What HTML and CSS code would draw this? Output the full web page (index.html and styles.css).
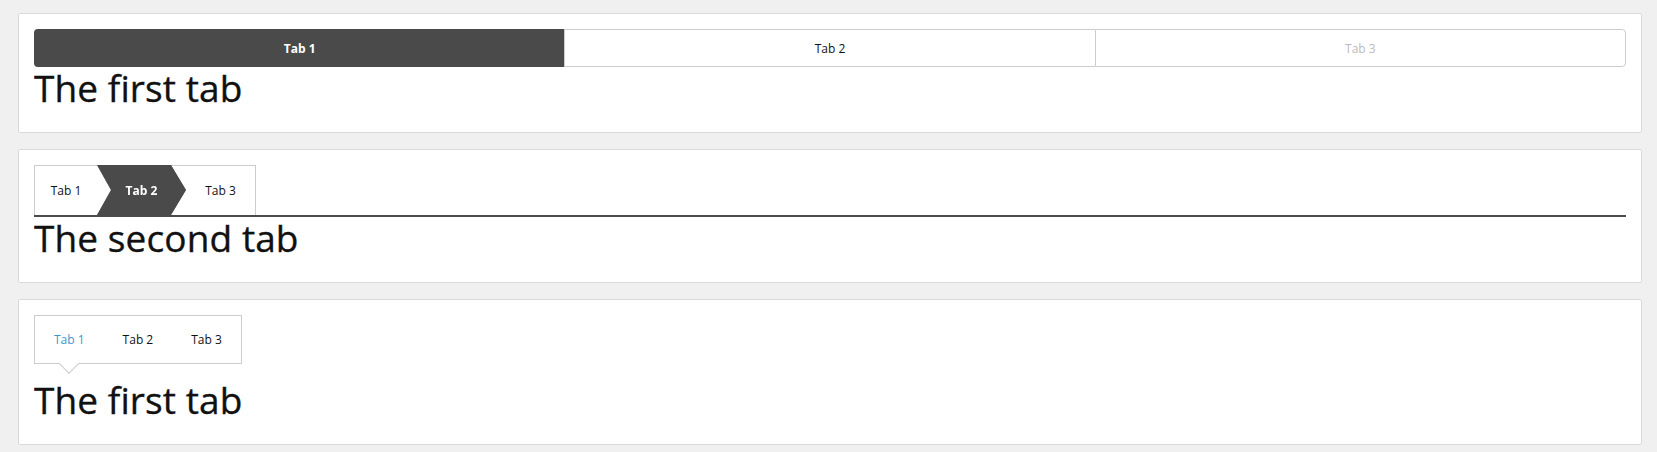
FILE: index.html
```html
<!DOCTYPE html>
<html>
<head>
<meta charset="utf-8">
<title>Tabs</title>
<link rel="stylesheet" href="styles.css">
</head>
<body>
  <section class="card">
    <div class="seg">
      <div class="seg-tab active">Tab 1</div>
      <div class="seg-tab">Tab 2</div>
      <div class="seg-tab disabled">Tab 3</div>
    </div>
    <h1 class="title">The first tab</h1>
  </section>

  <section class="card">
    <div class="steps">
      <div class="step step-first">Tab 1</div>
      <div class="step step-active"><span class="step-label">Tab 2</span></div>
      <div class="step step-last">Tab 3</div>
    </div>
    <h1 class="title">The second tab</h1>
  </section>

  <section class="card">
    <div class="pills">
      <div class="pill active">Tab 1</div>
      <div class="pill">Tab 2</div>
      <div class="pill">Tab 3</div>
    </div>
    <h1 class="title">The first tab</h1>
  </section>
</body>
</html>
```

FILE: styles.css
```css
html, body {
  background: #f0f0f0;
}
body {
  margin: 13px 15px 0 18px;
  font-family: "Open Sans", "Liberation Sans", sans-serif;
  color: #111;
}
.card {
  background: #fff;
  border: 1px solid #d9d9d9;
  border-radius: 2px;
  padding: 15px;
  margin-bottom: 16px;
}
.title {
  font-size: 37px;
  line-height: 42px;
  font-weight: 400;
  letter-spacing: 0.1px;
  -webkit-text-stroke: 0.35px #111;
  margin: 0 0 8px 0;
  color: #111;
}

/* Segmented tabs */
.seg {
  display: flex;
  height: 38px;
}
.seg-tab {
  flex: 1 1 0;
  box-sizing: border-box;
  border-top: 1px solid #ccc;
  border-bottom: 1px solid #ccc;
  border-left: 1px solid #ccc;
  display: flex;
  align-items: center;
  justify-content: center;
  font-size: 12px;
  color: #111;
  background: #fff;
}
.seg-tab:last-child {
  border-right: 1px solid #ccc;
  border-radius: 0 4px 4px 0;
}
.seg-tab.active {
  background: #4a4a4a;
  border-color: #4a4a4a;
  border-radius: 4px 0 0 4px;
  color: #fff;
  font-weight: 700;
}
.seg-tab.active + .seg-tab {
  border-left-color: #ccc;
}
.seg-tab.disabled {
  color: #bbb;
}

/* Chevron steps */
.steps {
  display: flex;
  border-bottom: 2px solid #4a4a4a;
  height: 50px;
}
.step {
  box-sizing: border-box;
  height: 50px;
  display: flex;
  align-items: center;
  justify-content: center;
  font-size: 12px;
  color: #111;
}
.step-first {
  width: 63px;
  border-top: 1px solid #ccc;
  border-left: 1px solid #ccc;
}
.step-active {
  width: 89px;
  margin-right: -15px;
  position: relative;
  z-index: 1;
  filter: drop-shadow(0 0 0.6px rgba(0, 0, 0, 0.45));
}
.step-active::before {
  content: "";
  position: absolute;
  inset: 0;
  background: #4a4a4a;
  clip-path: polygon(0 0, 74px 0, 89px 25px, 74px 50px, 0 50px, 14px 25px);
}
.step-label {
  position: relative;
  color: #fff;
  font-weight: 700;
}
.step-last {
  width: 85px;
  padding-left: 15px;
  border-top: 1px solid #ccc;
  border-right: 1px solid #ccc;
}

/* Pill tabs with pointer */
.pills {
  display: inline-flex;
  border: 1px solid #ccc;
  margin-bottom: 15px;
  position: relative;
  vertical-align: top;
}
.pill {
  padding: 0 19px;
  line-height: 47px;
  font-size: 12px;
  color: #111;
  position: relative;
}
.pill.active {
  color: #3d97d0;
}
.pill.active::after {
  content: "";
  position: absolute;
  left: 50%;
  bottom: -8px;
  width: 13px;
  height: 13px;
  margin-left: -7.5px;
  background: #fff;
  border-right: 1px solid #ccc;
  border-bottom: 1px solid #ccc;
  transform: rotate(45deg);
}
```
